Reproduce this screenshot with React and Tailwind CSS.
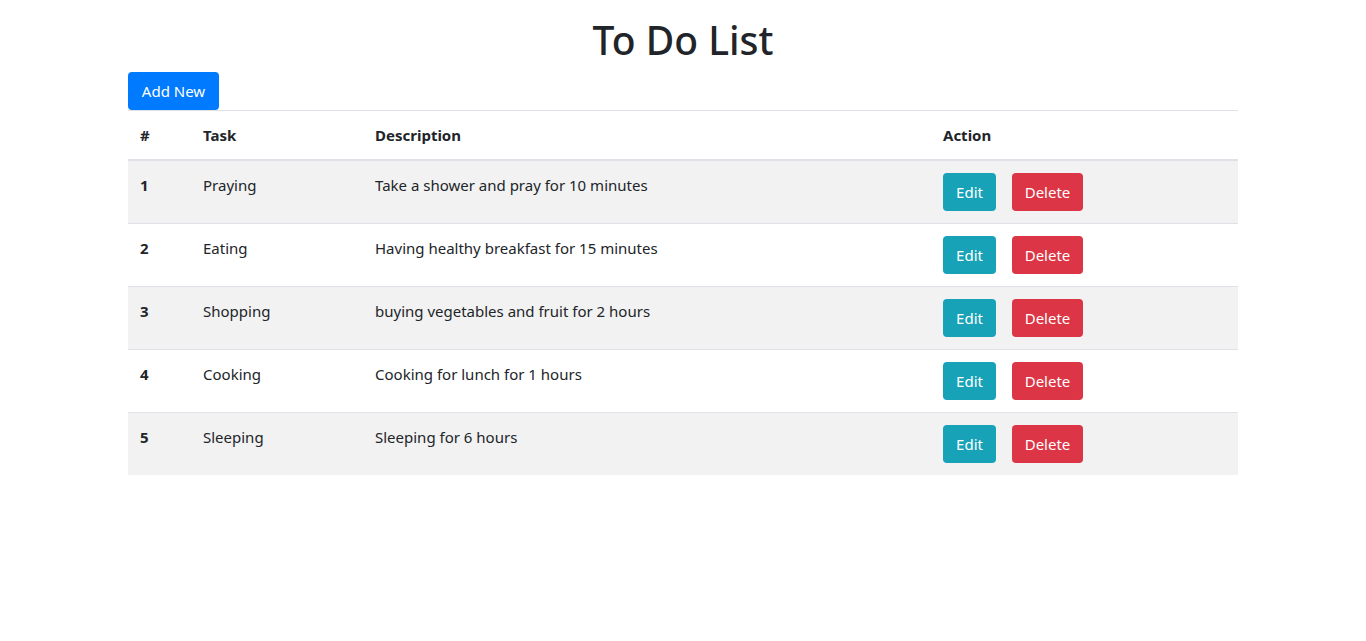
const tasks = [
  { id: 1, task: 'Praying', desc: 'Take a shower and pray for 10 minutes' },
  { id: 2, task: 'Eating', desc: 'Having healthy breakfast for 15 minutes' },
  { id: 3, task: 'Shopping', desc: 'buying vegetables and fruit for 2 hours' },
  { id: 4, task: 'Cooking', desc: 'Cooking for lunch for 1 hours' },
  { id: 5, task: 'Sleeping', desc: 'Sleeping for 6 hours' },
];

export default function App() {
  return (
    <div className="min-h-screen bg-white text-[#212529] font-['Noto_Sans',sans-serif] text-[15px] leading-6">
      <div className="w-[1110px] mx-auto pt-4">
        <h1 className="text-center text-[39px] leading-[48px] font-medium mb-2">To Do List</h1>
        <button className="h-[38px] w-[91px] rounded bg-[#007bff] text-white">Add New</button>
        <table className="w-full border-collapse">
          <thead>
            <tr className="border-t border-[#dee2e6] border-b-2">
              <th className="w-[63px] p-3 text-left font-bold align-bottom">#</th>
              <th className="w-[172px] p-3 text-left font-bold align-bottom">Task</th>
              <th className="w-[568px] p-3 text-left font-bold align-bottom">Description</th>
              <th className="p-3 text-left font-bold align-bottom">Action</th>
            </tr>
          </thead>
          <tbody>
            {tasks.map((t, i) => (
              <tr key={t.id} className={`border-t border-[#dee2e6] ${i % 2 === 0 ? 'bg-[#f2f2f2]' : 'bg-white'}`}>
                <td className="p-3 align-top font-bold">{t.id}</td>
                <td className="p-3 align-top">{t.task}</td>
                <td className="p-3 align-top">{t.desc}</td>
                <td className="p-3 align-top">
                  <div className="flex gap-4">
                    <button className="h-[38px] w-[53px] rounded bg-[#17a2b8] text-white">Edit</button>
                    <button className="h-[38px] w-[71px] rounded bg-[#dc3545] text-white">Delete</button>
                  </div>
                </td>
              </tr>
            ))}
          </tbody>
        </table>
      </div>
    </div>
  );
}
